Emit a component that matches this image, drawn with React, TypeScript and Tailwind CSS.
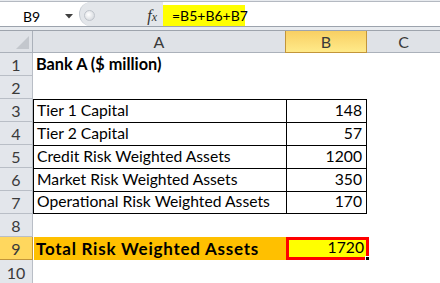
import React from 'react';

const rows: { n: number; label: string; value: string; boxed?: boolean; bold?: boolean }[] = [
  { n: 1, label: 'Bank A ($ million)', value: '', bold: true },
  { n: 2, label: '', value: '' },
  { n: 3, label: 'Tier 1 Capital', value: '148', boxed: true },
  { n: 4, label: 'Tier 2 Capital', value: '57', boxed: true },
  { n: 5, label: 'Credit Risk Weighted Assets', value: '1200', boxed: true },
  { n: 6, label: 'Market Risk Weighted Assets', value: '350', boxed: true },
  { n: 7, label: 'Operational Risk Weighted Assets', value: '170', boxed: true },
  { n: 8, label: '', value: '' },
];

function FormulaBar() {
  return (
    <div className="h-[30px] bg-[#e8ebef] flex flex-col">
      <div className="h-[2px] border-b border-[#b4b9c1]" />
      <div className="flex h-[25px] bg-white border-b border-[#9ca3ad]">
        {/* name box */}
        <div className="w-[79px] shrink-0 flex items-center pl-[23px] pr-[6px] pt-[5px] text-[14px] leading-none text-black">
          <span className="flex-1">B9</span>
          <svg width="8" height="5" viewBox="0 0 8 5"><path d="M0 0h8L4 4.5z" fill="#404040" /></svg>
        </div>
        {/* grip + fx */}
        <div className="w-[84px] shrink-0 flex items-center bg-[#e3e6ea] rounded-l-full border-l border-[#c5cad1]">
          <div className="ml-[4px] mt-[2px] w-[11px] h-[11px] rounded-full bg-[radial-gradient(circle_at_40%_40%,#ffffff,#cdd1d7)] border border-[#bfc4cb]" />
          <span className="ml-auto mr-[6px] mt-[3px] font-['Liberation_Serif',serif] italic text-[16px] text-[#333] leading-none">
            f<span className="text-[12px]">x</span>
          </span>
        </div>
        {/* formula */}
        <div className="flex-1 flex pt-[3px]">
          <div className="h-full w-[82px] shrink-0 bg-[#ffff00] flex items-center pl-[9px] pt-[1px] text-[14px] leading-none text-black whitespace-nowrap">=B5+B6+B7</div>
        </div>
      </div>
    </div>
  );
}

function ColumnHeaders() {
  return (
    <div className="flex h-[23px] border-t border-[#9ea4ad] text-[16px] text-[#3a3a3a]">
      <div className="w-[33px] relative bg-[#dfe2e7] border-r border-b border-[#abb1ba] overflow-hidden">
        <svg className="absolute right-[3px] bottom-[3px]" width="13" height="13" viewBox="0 0 13 13">
          <path d="M13 0V13H0z" fill="#c3c7cd" />
        </svg>
      </div>
      <div className="w-[253px] flex items-center justify-center bg-[#dfe2e7] border-r border-b border-[#abb1ba]">A</div>
      <div className="w-[82px] flex items-center justify-center bg-gradient-to-b from-[#f8cf62] to-[#ffea8a] border border-t-0 border-[#c2953a] ml-[-1px]">B</div>
      <div className="flex-1 flex items-center justify-center bg-[#dfe2e7] border-b border-[#abb1ba]">C</div>
    </div>
  );
}

export default function App() {
  return (
    <div className="w-[440px] h-[283px] overflow-hidden bg-white font-[Lato,sans-serif]">
      <FormulaBar />
      <ColumnHeaders />
      {rows.map((r) => (
        <div key={r.n} className="flex h-[23px] text-black">
          <div className="w-[33px] flex items-center justify-center pt-[2px] bg-[#e3e6eb] border-r border-b border-[#b9bec6] text-[16px] text-[#3a3a3a]">
            {r.n}
          </div>
          <div
            className={`w-[253px] flex items-end pl-[3px] pb-[3.5px] leading-none whitespace-nowrap ${
              r.bold ? 'font-bold text-[16.3px]' : 'text-[15.7px]'
            } ${r.boxed ? 'border-l border-t border-black' : ''} ${r.n === 7 ? 'border-b' : ''}`}
          >
            {r.label}
          </div>
          <div
            className={`w-[81px] flex items-end justify-end pr-[4px] pb-[3.5px] leading-none text-[15.7px] ${
              r.boxed ? 'border-l border-r border-t border-black' : ''
            } ${r.n === 7 ? 'border-b' : ''}`}
          >
            {r.value}
          </div>
          <div className="flex-1" />
        </div>
      ))}
      {/* row 9 */}
      <div className="flex h-[23px] text-black">
        <div className="w-[33px] flex items-center justify-center pt-[2px] bg-[#ffd75e] border-r border-b border-[#c2953a] text-[16px] text-[#3a3a3a]">9</div>
        <div className="w-[252px] ml-[1px] bg-[#ffc000] flex items-end pl-[2px] pb-[3px] leading-none font-bold text-[17px] tracking-[0.75px] whitespace-nowrap">
          Total Risk Weighted Assets
        </div>
        <div className="relative w-[83px] bg-[#ffff00] border-[3px] border-[#ff0000] flex items-end justify-end pr-[2px] pb-[1px] leading-none text-[15.7px]">
          1720
          <div className="absolute right-[-4px] bottom-[-4px] w-[5px] h-[5px] bg-black border border-white" />
        </div>
        <div className="flex-1" />
      </div>
      {/* row 10 */}
      <div className="flex h-[23px]">
        <div className="w-[33px] flex items-center justify-center pt-[2px] bg-[#e3e6eb] border-r border-[#b9bec6] text-[16px] text-[#3a3a3a]">10</div>
        <div className="flex-1" />
      </div>
    </div>
  );
}
